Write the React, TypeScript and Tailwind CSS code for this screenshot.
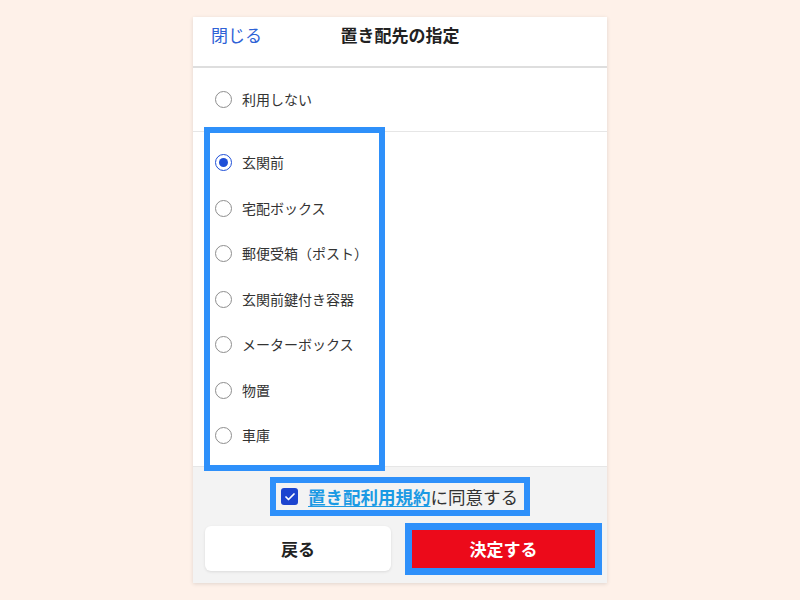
import { Check } from "lucide-react";

const options = [
  "玄関前",
  "宅配ボックス",
  "郵便受箱（ポスト）",
  "玄関前鍵付き容器",
  "メーターボックス",
  "物置",
  "車庫",
];

function Radio({ checked }: { checked?: boolean }) {
  return checked ? (
    <span className="w-[17px] h-[17px] rounded-full border-[1.5px] border-[#1e4fd8] flex items-center justify-center shrink-0">
      <span className="w-[9px] h-[9px] rounded-full bg-[#1e4fd8]" />
    </span>
  ) : (
    <span className="w-[17px] h-[17px] rounded-full border-[1.5px] border-[#8e8e8e] shrink-0" />
  );
}

export default function App() {
  return (
    <div
      className="w-[800px] h-[600px] bg-[#fef1e9] pt-[17px]"
      style={{ fontFamily: '"Noto Sans CJK JP", "Noto Sans", sans-serif' }}
    >
      <div className="w-[414px] h-[566px] mx-auto bg-white shadow-[0_1px_4px_rgba(0,0,0,0.12)] flex flex-col">
        {/* ヘッダー */}
        <div className="h-[51px] border-b-2 border-[#dedede] grid grid-cols-[1fr_auto_1fr] pt-[6px] px-[18px]">
          <span className="text-[17px] leading-[24px] text-[#2e62d6]">閉じる</span>
          <span className="text-[17px] leading-[24px] font-bold text-[#222]">置き配先の指定</span>
          <span />
        </div>

        {/* 利用しない */}
        <div className="h-[64px] border-b border-[#e6e6e6] flex items-center pl-[22px] gap-[10px]">
          <Radio />
          <span className="text-[14px] text-[#333]">利用しない</span>
        </div>

        {/* 置き配先リスト */}
        <div className="relative h-[334px] py-[8px]">
          {options.map((o, i) => (
            <div key={o} className="h-[45.5px] flex items-center pl-[22px] gap-[10px]">
              <Radio checked={i === 0} />
              <span className="text-[14px] text-[#333]">{o}</span>
            </div>
          ))}
          <div className="absolute left-[11px] top-[-5px] w-[181px] h-[344px] border-[6px] border-[#2e90fa] pointer-events-none" />
        </div>

        {/* フッター */}
        <div className="flex-1 bg-[#f3f3f3] border-t border-[#e6e6e6] flex flex-col items-center pt-[10px] px-[12px]">
          <div className="border-[6px] border-[#2e90fa] h-[39px] flex items-center pl-[5px] pr-[6px] gap-[10px]">
            <span className="w-[17px] h-[17px] rounded-[3px] bg-[#1c44cf] flex items-center justify-center">
              <Check className="w-[12px] h-[12px] text-white" strokeWidth={3.5} />
            </span>
            <span className="text-[17.5px] leading-[20px] text-[#333]">
              <span className="text-[#1b9ae4] font-bold underline underline-offset-2">置き配利用規約</span>
              に同意する
            </span>
          </div>

          <div className="w-full flex items-center gap-[21px] mt-[10px]">
            <button className="w-[186px] h-[45px] bg-white rounded-[6px] shadow-[0_1px_3px_rgba(0,0,0,0.1)] text-[17px] font-bold text-[#222]">
              戻る
            </button>
            <button className="w-[183px] h-[38px] bg-[#ec0a1a] text-white text-[17px] font-bold outline-solid outline-[7px] outline-[#2e90fa]">
              決定する
            </button>
          </div>
        </div>
      </div>
    </div>
  );
}
